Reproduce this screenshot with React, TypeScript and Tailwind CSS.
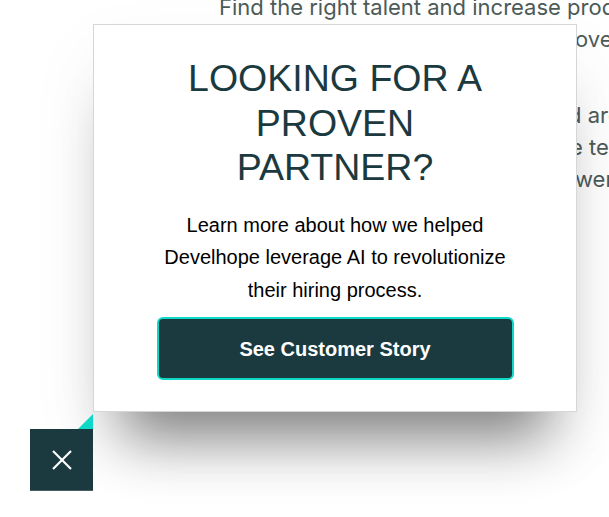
import React from "react";

function Line({ prefixWidth, prefix, rest }: { prefixWidth: string; prefix: string; rest: string }) {
  return (
    <p className="flex">
      <span className={`inline-block overflow-hidden shrink-0 ${prefixWidth}`}>{prefix}</span>
      <span>{rest}</span>
    </p>
  );
}

export default function App() {
  return (
    <div className="relative w-[609px] h-[517px] overflow-hidden bg-white">
      {/* background page text */}
      <div
        className="pl-[219px] text-[22px] leading-[32px] text-[#4d5b58] whitespace-nowrap"
        style={{ fontFamily: "Inter, 'Noto Sans', sans-serif" }}
      >
        <div className="-mt-[9px]">
          <p>Find the right talent and increase productivity with AI</p>
          <Line prefixWidth="w-[356px]" prefix="while hiring developers at scale and impr" rest="ove your results" />
        </div>
        <div className="mt-[44px]">
          <Line prefixWidth="w-[349px]" prefix="Vetted developers, matched fast an" rest="d around the world" />
          <Line prefixWidth="w-[351px]" prefix="Scale your engineering and grow th" rest="e teams you need" />
          <Line prefixWidth="w-[356px]" prefix="Our hiring platform is po" rest="wered by AI" />
        </div>
      </div>

      {/* modal */}
      <div className="absolute left-[93px] top-[24px] w-[484px] h-[388px] bg-white border border-[#d6d6d6] shadow-[0_55px_55px_-30px_rgba(0,0,0,0.48),0_30px_70px_rgba(0,0,0,0.06)]">
        <div
          className="flex flex-col items-center px-[62px] pt-[31px] text-center"
          style={{ fontFamily: "'Liberation Sans', Arial, sans-serif" }}
        >
          <h2 className="text-[37.5px] leading-[44.5px] text-[#1b3a40] font-normal">
            LOOKING FOR A
            <br />
            PROVEN
            <br />
            PARTNER?
          </h2>
          <p className="mt-[19px] text-[20px] leading-[32.5px] text-black">
            Learn more about how we helped Develhope leverage AI to revolutionize their hiring process.
          </p>
          <button className="mt-[11px] w-[357px] h-[63px] rounded-[6px] border-2 border-[#10d8c6] bg-[#1b3a40] text-white font-bold text-[20px]">
            See Customer Story
          </button>
        </div>
      </div>

      {/* teal corner */}
      <svg
        className="absolute left-[78px] top-[414px]"
        width="15"
        height="15"
        viewBox="0 0 15 15"
      >
        <polygon points="15,0 15,15 0,15" fill="#10d8c6" />
      </svg>

      {/* close button */}
      <button className="absolute left-[30px] top-[429px] w-[63px] h-[62px] bg-[#1b3a40] border-b border-[#4a5e63] flex items-center justify-center">
        <svg width="20" height="20" viewBox="0 0 20 20">
          <line x1="1" y1="1" x2="19" y2="19" stroke="white" strokeWidth="2.2" />
          <line x1="19" y1="1" x2="1" y2="19" stroke="white" strokeWidth="2.2" />
        </svg>
      </button>
    </div>
  );
}
